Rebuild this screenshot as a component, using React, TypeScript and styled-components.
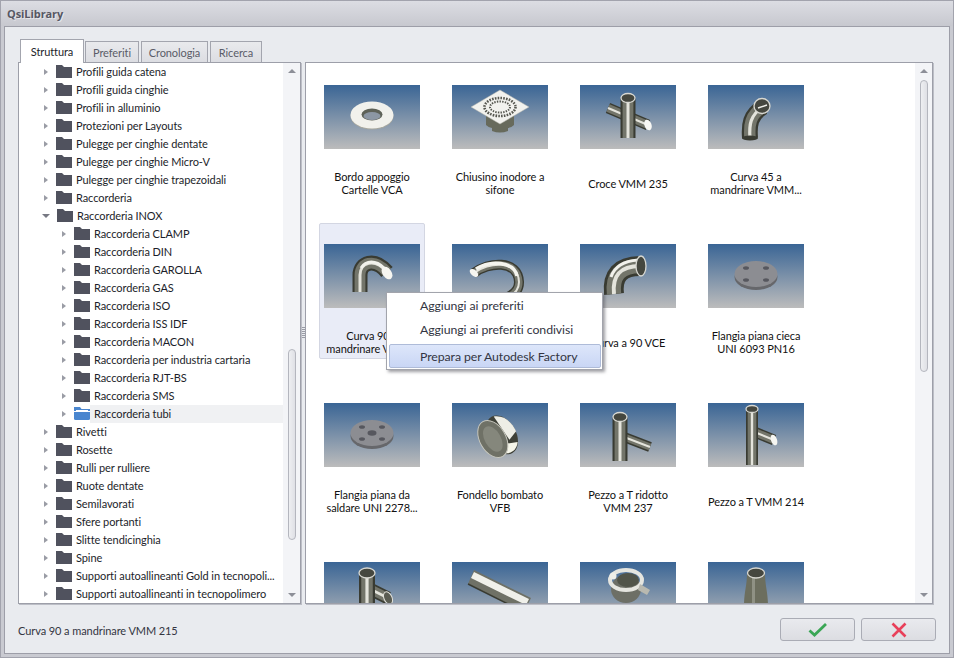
import React from 'react';
import { createGlobalStyle, styled } from 'styled-components';

const treeRows: { label: string; level: number; open?: boolean; active?: boolean }[] = [
  { label: 'Profili guida catena', level: 0 },
  { label: 'Profili guida cinghie', level: 0 },
  { label: 'Profili in alluminio', level: 0 },
  { label: 'Protezioni per Layouts', level: 0 },
  { label: 'Pulegge per cinghie dentate', level: 0 },
  { label: 'Pulegge per cinghie Micro-V', level: 0 },
  { label: 'Pulegge per cinghie trapezoidali', level: 0 },
  { label: 'Raccorderia', level: 0 },
  { label: 'Raccorderia INOX', level: 0, open: true },
  { label: 'Raccorderia CLAMP', level: 1 },
  { label: 'Raccorderia DIN', level: 1 },
  { label: 'Raccorderia GAROLLA', level: 1 },
  { label: 'Raccorderia GAS', level: 1 },
  { label: 'Raccorderia ISO', level: 1 },
  { label: 'Raccorderia ISS IDF', level: 1 },
  { label: 'Raccorderia MACON', level: 1 },
  { label: 'Raccorderia per industria cartaria', level: 1 },
  { label: 'Raccorderia RJT-BS', level: 1 },
  { label: 'Raccorderia SMS', level: 1 },
  { label: 'Raccorderia tubi', level: 1, active: true },
  { label: 'Rivetti', level: 0 },
  { label: 'Rosette', level: 0 },
  { label: 'Rulli per rulliere', level: 0 },
  { label: 'Ruote dentate', level: 0 },
  { label: 'Semilavorati', level: 0 },
  { label: 'Sfere portanti', level: 0 },
  { label: 'Slitte tendicinghia', level: 0 },
  { label: 'Spine', level: 0 },
  { label: 'Supporti autoallineanti Gold in tecnopoli...', level: 0 },
  { label: 'Supporti autoallineanti in tecnopolimero', level: 0 },
];

function Tube({ d, w }: { d: string; w: number }) {
  return (
    <g fill="none">
      <path d={d} stroke="#393b32" strokeWidth={w} />
      <path d={d} stroke="#73756a" strokeWidth={w * 0.72} />
      <path d={d} stroke="#e4e4dc" strokeWidth={w * 0.2} />
    </g>
  );
}

function Mouth({ x, y, rx, ry, rot = 0 }: { x: number; y: number; rx: number; ry: number; rot?: number }) {
  return (
    <ellipse cx={x} cy={y} rx={rx} ry={ry} fill="#45473f" stroke="#d8d8d2" strokeWidth="1.3" transform={`rotate(${rot} ${x} ${y})`} />
  );
}

function Flange({ bore }: { bore?: boolean }) {
  return (
    <g>
      <ellipse cx="48" cy="33" rx="21.5" ry="13" fill="#66676b" />
      <ellipse cx="48" cy="30" rx="21.5" ry="13" fill="#8c8d92" />
      <ellipse cx="38" cy="24" rx="3" ry="1.8" fill="#56575e" />
      <ellipse cx="58" cy="24" rx="3" ry="1.8" fill="#56575e" />
      <ellipse cx="38" cy="36" rx="3" ry="1.8" fill="#56575e" />
      <ellipse cx="58" cy="36" rx="3" ry="1.8" fill="#56575e" />
      {bore && <ellipse cx="48" cy="30" rx="4.5" ry="2.8" fill="#56575e" />}
    </g>
  );
}

const parts: Record<string, React.ReactNode> = {
  washer: (
    <g>
      <ellipse cx="48" cy="31" rx="21.5" ry="13.5" fill="#a9a99f" />
      <ellipse cx="48" cy="30" rx="21.5" ry="13.5" fill="#f1f1ec" />
      <ellipse cx="48" cy="29.5" rx="10.5" ry="6" fill="#5e6258" />
      <ellipse cx="48" cy="31" rx="8.5" ry="4" fill="#8c97a4" />
    </g>
  ),
  drain: (
    <g>
      <path d="M34 30h28v10q-3 3-6 3v3q-8 3-16 0v-3q-3 0-6-3z" fill="#676a5c" />
      <path d="M48 5 77 22 48 39 19 22z" fill="#f2f2ee" stroke="#b5b5ad" strokeWidth=".5" />
      <ellipse cx="48" cy="22" rx="15.5" ry="9" fill="none" stroke="#55564f" strokeWidth="2.6" strokeDasharray="1.6 1.2" />
      <ellipse cx="48" cy="22" rx="10" ry="5.5" fill="none" stroke="#55564f" strokeWidth="2" strokeDasharray="1.4 1.2" />
    </g>
  ),
  cross: (
    <g>
      <Tube d="M28 23 68 40" w={11} />
      <Tube d="M48 13V53" w={15} />
      <Mouth x={48} y={13} rx={7} ry={4.5} />
      <ellipse cx="68" cy="40" rx="3.5" ry="5.5" fill="#f8f8f4" transform="rotate(-20 68 40)" />
    </g>
  ),
  curve45: (
    <g>
      <Tube d="M42 53C41 40 42 30 55 22" w={16} />
      <Mouth x={54} y={21} rx={8} ry={7.5} />
      <path d="M50 23 59 20" stroke="#f0f0ea" strokeWidth="1.4" />
      <ellipse cx="42" cy="53" rx="8" ry="2.6" fill="#393b32" />
    </g>
  ),
  curve90: (
    <g>
      <Tube d="M36 48V31C36 19 50 13 63 28" w={15} />
      <path d="M37 24C42 16 52 16 60 24" fill="none" stroke="#f2f2ec" strokeWidth="3" />
      <ellipse cx="63" cy="29" rx="4.5" ry="7" fill="#f6f6f1" transform="rotate(-35 63 29)" />
    </g>
  ),
  ubend: (
    <g>
      <Tube d="M22 29C36 18 66 15 67 38C67 50 56 55 40 56" w={10} />
      <path d="M24 25C38 16 62 17 65 32" fill="none" stroke="#f4f4ee" strokeWidth="3.5" />
      <ellipse cx="22" cy="29" rx="3" ry="5" fill="#f6f6f1" transform="rotate(-50 22 29)" />
    </g>
  ),
  vce: (
    <g>
      <Tube d="M34 50C32 32 40 22 60 22" w={20} />
      <path d="M31 33C35 21 45 17 58 16" fill="none" stroke="#f2f2ec" strokeWidth="3" />
      <Mouth x={61} y={22} rx={5} ry={10} />
    </g>
  ),
  blind: <Flange />,
  weld: <Flange bore />,
  cap: (
    <g transform="rotate(-30 46 33)">
      <ellipse cx="50" cy="34" rx="14" ry="21" fill="#3f4138" />
      <path d="M52 14C62 18 65 28 64 38L54 42z" fill="#eeeee6" />
      <path d="M42 50C48 56 56 54 60 48L50 44z" fill="#f6f6ea" />
      <ellipse cx="40" cy="33" rx="13" ry="20" fill="#6f7166" stroke="#c7c7bd" />
      <ellipse cx="40" cy="33" rx="8" ry="14" fill="#85877c" />
    </g>
  ),
  teeReduced: (
    <g>
      <Tube d="M44 34 70 44" w={10} />
      <Tube d="M40 14V58" w={15} />
      <Mouth x={40} y={14} rx={7} ry={4.5} />
    </g>
  ),
  tee: (
    <g>
      <Tube d="M44 28 66 37" w={11} />
      <Tube d="M44 6V62" w={12} />
      <Mouth x={44} y={6} rx={6} ry={3.5} />
      <ellipse cx="66" cy="37" rx="3" ry="5.5" fill="#f6f6f1" transform="rotate(-20 66 37)" />
    </g>
  ),
  teeShort: (
    <g>
      <Tube d="M44 26 64 36" w={13} />
      <Tube d="M43 11V60" w={16} />
      <Mouth x={43} y={11} rx={8} ry={5} />
      <ellipse cx="64" cy="36" rx="4" ry="6.500" fill="#5a5c52" stroke="#e4e4de" transform="rotate(-25 64 36)" />
    </g>
  ),
  pipe: (
    <g>
      <path d="M22 8 79 36 72 50 16 22z" fill="#6f7166" />
      <path d="M22 10 77 37 74 43 19 16z" fill="#f0f0ea" />
      <path d="M16 22 72 50" stroke="#393b32" strokeWidth="1.5" />
    </g>
  ),
  clamp: (
    <g>
      <ellipse cx="46" cy="27" rx="15" ry="14" fill="#6d6f66" />
      <ellipse cx="46" cy="18" rx="16" ry="10" fill="none" stroke="#e5e5df" strokeWidth="4" />
      <ellipse cx="48" cy="18" rx="11" ry="7" fill="#515449" />
      <circle cx="33" cy="14" r="3.5" fill="#eeeee8" />
      <path d="M60 22l10 6-3 5-9-5z" fill="#b9b9b0" />
    </g>
  ),
  reducer: (
    <g>
      <path d="M39 11H57C57 24 60 30 60 44H36C36 30 39 24 39 11z" fill="#6c6e5e" />
      <path d="M44 14h3v30h-3z" fill="#8f9184" />
      <Mouth x={48} y={11} rx={8.5} ry={5} />
    </g>
  ),
};

const products = [
  { part: 'washer', lines: ['Bordo appoggio', 'Cartelle VCA'] },
  { part: 'drain', lines: ['Chiusino inodore a', 'sifone'] },
  { part: 'cross', lines: ['Croce VMM 235'] },
  { part: 'curve45', lines: ['Curva 45 a', 'mandrinare VMM...'] },
  { part: 'curve90', lines: ['Curva 90 a', 'mandrinare VMM...'], selected: true },
  { part: 'ubend', lines: [] },
  { part: 'vce', lines: ['Curva a 90 VCE'] },
  { part: 'blind', lines: ['Flangia piana cieca', 'UNI 6093 PN16'] },
  { part: 'weld', lines: ['Flangia piana da', 'saldare UNI 2278...'] },
  { part: 'cap', lines: ['Fondello bombato', 'VFB'] },
  { part: 'teeReduced', lines: ['Pezzo a T ridotto', 'VMM 237'] },
  { part: 'tee', lines: ['Pezzo a T VMM 214'] },
  { part: 'teeShort', lines: [] },
  { part: 'pipe', lines: [] },
  { part: 'clamp', lines: [] },
  { part: 'reducer', lines: [] },
];

export default function App() {
  return (
    <St.Window>
      <GlobalStyle />
      <St.TitleBar>QsiLibrary</St.TitleBar>
      <St.Frame>
        <St.Tabs>
          <St.Tab $active $width={64}>Struttura</St.Tab>
          <St.Tab $width={54}>Preferiti</St.Tab>
          <St.Tab $width={67}>Cronologia</St.Tab>
          <St.Tab $width={52}>Ricerca</St.Tab>
        </St.Tabs>
        <St.Panels>
          <St.TreePanel>
            <St.Tree>
              {treeRows.map((row) => (
                <St.TreeRow key={row.label} $level={row.level}>
                  <St.Arrow $open={row.open} />
                  {row.active ? <OpenFolder /> : <Folder />}
                  <St.TreeLabel $active={row.active}>{row.label}</St.TreeLabel>
                </St.TreeRow>
              ))}
            </St.Tree>
            <St.ScrollBar>
              <St.ScrollUp />
              <St.TreeThumb />
              <St.ScrollDown />
            </St.ScrollBar>
          </St.TreePanel>
          <St.Splitter>
            <St.Grip />
          </St.Splitter>
          <St.GridPanel>
            <St.Grid>
              {products.map((item) => (
                <St.Item key={item.part} $selected={item.selected}>
                  <St.Thumb>
                    <svg width="96" height="64" viewBox="0 0 96 64">
                      {parts[item.part]}
                    </svg>
                  </St.Thumb>
                  <St.Caption>
                    {item.lines.map((line) => (
                      <div key={line}>{line}</div>
                    ))}
                  </St.Caption>
                </St.Item>
              ))}
            </St.Grid>
            <St.ScrollBar>
              <St.ScrollUp />
              <St.GridThumb />
              <St.ScrollDown />
            </St.ScrollBar>
            <St.Menu>
              <St.MenuItem>Aggiungi ai preferiti</St.MenuItem>
              <St.MenuItem>Aggiungi ai preferiti condivisi</St.MenuItem>
              <St.MenuItem $hover>Prepara per Autodesk Factory</St.MenuItem>
            </St.Menu>
          </St.GridPanel>
        </St.Panels>
        <St.Footer>
          <St.Status>Curva 90 a mandrinare VMM 215</St.Status>
          <St.Buttons>
            <St.Button aria-label="OK">
              <svg width="20" height="15" viewBox="0 0 20 15">
                <path d="M1.5 8.5 6.5 13 18 2" fill="none" stroke="#3aa655" strokeWidth="2.8" />
              </svg>
            </St.Button>
            <St.Button aria-label="Annulla">
              <svg width="16" height="16" viewBox="0 0 16 16">
                <path d="M1.5 1.5 14.5 14.5M14.5 1.5 1.5 14.5" fill="none" stroke="#e8405a" strokeWidth="2.6" />
              </svg>
            </St.Button>
          </St.Buttons>
        </St.Footer>
      </St.Frame>
    </St.Window>
  );
}

function Folder() {
  return (
    <St.FolderIcon width="16" height="13" viewBox="0 0 16 13">
      <path d="M0 0h6l2 2h8v11H0z" fill="#50525e" />
    </St.FolderIcon>
  );
}

function OpenFolder() {
  return (
    <St.FolderIcon width="16" height="13" viewBox="0 0 16 13">
      <path d="M0 0h6l1.500 2H16v2H0z" fill="#4a86cf" />
      <path d="M2 3h12v1.500H2z" fill="#ffffff" />
      <path d="M0 5h16v6.500q0 1.500-1.500 1.500h-13Q0 13 0 11.500z" fill="#4a86cf" />
    </St.FolderIcon>
  );
}

const GlobalStyle = createGlobalStyle`
  html, body {
    margin: 0;
    padding: 0;
    width: 954px;
    height: 658px;
    overflow: hidden;
  }
  body {
    font-family: Lato, "Open Sans", sans-serif;
    font-size: 11px;
    letter-spacing: -0.08px;
    color: #1c1e2a;
  }
`;

const St = {
  Window: styled.div`
    box-sizing: border-box;
    width: 954px;
    height: 658px;
    display: flex;
    flex-direction: column;
    padding: 0 3px 3px;
    background: #c9cad1;
    border: 1px solid #a2a3ad;
  `,

  TitleBar: styled.div`
    box-sizing: border-box;
    flex: 0 0 25px;
    display: flex;
    align-items: center;
    margin: 0 -3px;
    padding: 0 0 1px 6px;
    font-family: "Open Sans", sans-serif;
    font-size: 11px;
    font-weight: 700;
    color: #565763;
    text-shadow: 1px 1px 0 #e6e6ea;
    background: linear-gradient(#dcdde3, #c7c8cf);
  `,

  Frame: styled.div`
    flex: 1;
    min-height: 0;
    display: flex;
    flex-direction: column;
    padding: 12px 16px 0 13px;
    background: #e9ebef;
    border: 1px solid #9d9ea8;
  `,

  Tabs: styled.div`
    flex: 0 0 23px;
    display: flex;
    align-items: flex-end;
    gap: 2px;
    padding-left: 2px;
  `,

  Tab: styled.div<{ $active?: boolean; $width: number }>`
    box-sizing: border-box;
    width: ${({ $width }) => $width}px;
    height: ${({ $active }) => ($active ? '24px' : '21px')};
    margin-right: ${({ $active }) => ($active ? '-1px' : '0')};
    margin-bottom: ${({ $active }) => ($active ? '-1px' : '0')};
    display: flex;
    align-items: center;
    justify-content: center;
    color: ${({ $active }) => ($active ? '#1c1e2a' : '#5a5c68')};
    background: ${({ $active }) => ($active ? '#ffffff' : 'linear-gradient(#e9eaed, #dcdde2)')};
    border: 1px solid #a3a5ae;
    border-bottom: 0;
    position: relative;
    z-index: ${({ $active }) => ($active ? 1 : 0)};
  `,

  Panels: styled.div`
    flex: 0 0 542px;
    height: 542px;
    min-height: 0;
    display: flex;
  `,

  TreePanel: styled.div`
    box-sizing: border-box;
    flex: 0 0 283px;
    min-width: 0;
    display: flex;
    overflow: hidden;
    background: #ffffff;
    border: 1px solid #9d9fa9;
    box-shadow: 1px 1px 0 #bcbec6;
  `,

  Tree: styled.div`
    flex: 1;
    min-width: 0;
    overflow: hidden;
  `,

  TreeRow: styled.div<{ $level: number }>`
    height: 18px;
    display: flex;
    align-items: center;
    padding-left: ${({ $level }) => 23 + $level * 18}px;
  `,

  Arrow: styled.span<{ $open?: boolean }>`
    flex: 0 0 auto;
    width: 0;
    height: 0;
    margin-right: ${({ $open }) => ($open ? '7px' : '8px')};
    margin-left: ${({ $open }) => ($open ? '0' : '2px')};
    border-style: solid;
    border-color: transparent;
    border-width: ${({ $open }) => ($open ? '4px 4px 0' : '3px 0 3px 4px')};
    border-top-color: ${({ $open }) => ($open ? '#777983' : 'transparent')};
    border-left-color: ${({ $open }) => ($open ? 'transparent' : '#9a9ca5')};
  `,

  FolderIcon: styled.svg`
    flex: 0 0 auto;
    margin-top: -1px;
  `,

  TreeLabel: styled.span<{ $active?: boolean }>`
    flex: 1;
    min-width: 0;
    height: 18px;
    line-height: 18px;
    padding-left: 4px;
    white-space: nowrap;
    overflow: hidden;
    background: ${({ $active }) => ($active ? '#f0f1f3' : 'transparent')};
  `,

  ScrollBar: styled.div`
    flex: 0 0 17px;
    display: flex;
    flex-direction: column;
    align-items: center;
    background: #f3f4f7;
  `,

  ScrollUp: styled.span`
    margin-top: 6px;
    width: 0;
    height: 0;
    border: 4px solid transparent;
    border-top: 0;
    border-bottom-color: #8d8f98;
  `,

  ScrollDown: styled.span`
    margin-top: auto;
    margin-bottom: 6px;
    width: 0;
    height: 0;
    border: 4px solid transparent;
    border-bottom: 0;
    border-top-color: #8d8f98;
  `,

  TreeThumb: styled.div`
    box-sizing: border-box;
    width: 8px;
    height: 191px;
    margin-top: 276px;
    border: 1px solid #b4b6be;
    border-radius: 4px;
    background: linear-gradient(90deg, #eeeff2, #dfe0e5);
  `,

  GridThumb: styled.div`
    box-sizing: border-box;
    width: 8px;
    height: 292px;
    margin-top: 7px;
    border: 1px solid #b4b6be;
    border-radius: 4px;
    background: linear-gradient(90deg, #eeeff2, #dfe0e5);
  `,

  Splitter: styled.div`
    flex: 0 0 4px;
    display: flex;
    align-items: center;
    justify-content: center;
  `,

  Grip: styled.div`
    width: 3px;
    height: 12px;
    margin-top: -1px;
    background: repeating-linear-gradient(#9a9ca5 0 1px, transparent 1px 2px);
  `,

  GridPanel: styled.div`
    box-sizing: border-box;
    flex: 0 0 628px;
    min-width: 0;
    display: flex;
    background: #ffffff;
    border: 1px solid #9d9fa9;
    box-shadow: 1px 1px 0 #bcbec6;
    position: relative;
  `,

  Grid: styled.div`
    flex: 1;
    min-width: 0;
    overflow: hidden;
    display: grid;
    grid-template-columns: repeat(auto-fill, 106px);
    grid-auto-rows: 136px;
    column-gap: 22px;
    row-gap: 23px;
    padding: 1px 0 0 13px;
  `,

  Item: styled.div<{ $selected?: boolean }>`
    box-sizing: border-box;
    display: flex;
    flex-direction: column;
    align-items: center;
    padding-top: 20px;
    border: 1px solid ${({ $selected }) => ($selected ? '#d3d6e2' : 'transparent')};
    border-radius: 2px;
    background: ${({ $selected }) => ($selected ? '#e9ecf7' : 'transparent')};
  `,

  Thumb: styled.div`
    flex: 0 0 64px;
    width: 96px;
    height: 64px;
    background: linear-gradient(#3a6595, #bcbcbc);
    svg {
      display: block;
    }
  `,

  Caption: styled.div`
    flex: 1;
    width: 104px;
    display: flex;
    flex-direction: column;
    justify-content: center;
    text-align: center;
    line-height: 13px;
    color: #111111;
    padding-top: 18px;
    white-space: nowrap;
  `,

  Menu: styled.div`
    box-sizing: border-box;
    position: absolute;
    left: 80px;
    top: 229px;
    width: 217px;
    height: 78px;
    padding: 0 1px 1px 2px;
    display: flex;
    flex-direction: column;
    background: #ffffff;
    border: 1px solid #a2a4ac;
    box-shadow: 2px 2px 3px rgba(80, 80, 90, 0.55);
    font-size: 12.3px;
    color: #333542;
  `,

  MenuItem: styled.div<{ $hover?: boolean }>`
    box-sizing: border-box;
    flex: 0 0 24px;
    margin-top: ${({ $hover }) => ($hover ? '3px' : '0')};
    padding-left: 30px;
    display: flex;
    align-items: center;
    border: 1px solid ${({ $hover }) => ($hover ? '#aebbd8' : 'transparent')};
    border-radius: 2px;
    background: ${({ $hover }) => ($hover ? 'linear-gradient(#dde6fa, #c9d6f5)' : 'transparent')};
  `,

  Footer: styled.div`
    flex: 1;
    display: flex;
    align-items: center;
    justify-content: space-between;
    margin-right: -3px;
  `,

  Status: styled.div`
    color: #33353f;
    margin-top: 3px;
  `,

  Buttons: styled.div`
    display: flex;
    gap: 6px;
    margin-top: 2px;
  `,

  Button: styled.button`
    width: 75px;
    height: 23px;
    padding: 0;
    display: flex;
    align-items: center;
    justify-content: center;
    border: 1px solid #aaacb5;
    border-radius: 3px;
    background: linear-gradient(#e9eaee, #dcdde2);
  `,
};
